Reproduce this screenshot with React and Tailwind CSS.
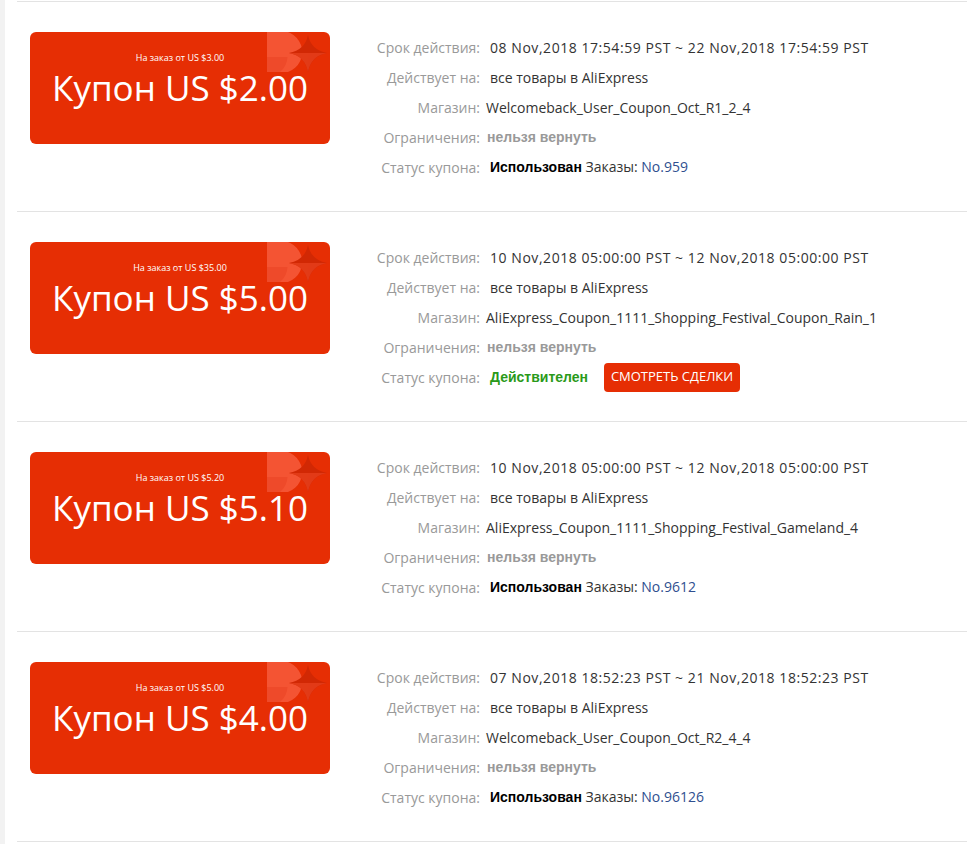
const coupons = [
  {
    min: 'На заказ от US $3.00',
    amount: 'Купон US $2.00',
    period: '08 Nov,2018 17:54:59 PST ~ 22 Nov,2018 17:54:59 PST',
    store: 'Welcomeback_User_Coupon_Oct_R1_2_4',
    used: true,
    order: 'No.959',
  },
  {
    min: 'На заказ от US $35.00',
    amount: 'Купон US $5.00',
    period: '10 Nov,2018 05:00:00 PST ~ 12 Nov,2018 05:00:00 PST',
    store: 'AliExpress_Coupon_1111_Shopping_Festival_Coupon_Rain_1',
    used: false,
  },
  {
    min: 'На заказ от US $5.20',
    amount: 'Купон US $5.10',
    period: '10 Nov,2018 05:00:00 PST ~ 12 Nov,2018 05:00:00 PST',
    store: 'AliExpress_Coupon_1111_Shopping_Festival_Gameland_4',
    used: true,
    order: 'No.9612',
  },
  {
    min: 'На заказ от US $5.00',
    amount: 'Купон US $4.00',
    period: '07 Nov,2018 18:52:23 PST ~ 21 Nov,2018 18:52:23 PST',
    store: 'Welcomeback_User_Coupon_Oct_R2_4_4',
    used: true,
    order: 'No.96126',
  },
];

function CouponCard({ min, amount }) {
  return (
    <div className="relative w-[300px] h-[112px] rounded-[6px] bg-[#e62e04] overflow-hidden flex flex-col items-center text-white">
      {/* corner decoration */}
      <svg className="absolute top-0 right-0" width="64" height="44" viewBox="0 0 64 44">
        <path d="M1 0 H8 A21 21 0 0 1 22 40 H1 Z" fill="#f65a3c" opacity="0.85" />
        <path d="M1 25 H21.5 A21 21 0 0 1 14 40 H1 Z" fill="#ee4a2a" />
        <path d="M42 3 Q45 18 61 21 Q45 24 42 40 Q39 24 23 21 Q39 18 42 3 Z" fill="#d12804" />
        <path d="M42 21 L61 21 Q45 24 42 40 Z" fill="#e23a17" />
        <path d="M42 21 L23 21 Q39 24 42 40 Z" fill="#ea4320" opacity="0.7" />
      </svg>
      <div className="relative mt-[21px] text-[9px] leading-[10px] font-['Open_Sans',sans-serif]">{min}</div>
      <div className="relative mt-[7px] text-[35px] leading-[36px] font-['Open_Sans',sans-serif]">{amount}</div>
    </div>
  );
}

function Row({ label, children }) {
  return (
    <div className="flex items-center h-[30px]">
      <div className="w-[160px] text-right text-[#999] pr-[10px]">{label}</div>
      <div className="flex items-center text-[#333]">{children}</div>
    </div>
  );
}

function CouponItem({ c }) {
  return (
    <div className="h-[210px] border-t border-[#e3e3e3] flex pl-[13px] pt-[30px]">
      <CouponCard min={c.min} amount={c.amount} />
      <div className="flex flex-col text-[14px] font-['Open_Sans',sans-serif]">
        <Row label="Срок действия:">
          <span className="tracking-[0.55px]">{c.period}</span>
        </Row>
        <Row label="Действует на:">все товары в AliExpress</Row>
        <Row label="Магазин:">
          <span className="-ml-[4px]">{c.store}</span>
        </Row>
        <Row label="Ограничения:">
          <span className="-ml-[3px] font-bold text-[#999] font-['Liberation_Sans',sans-serif]">нельзя вернуть</span>
        </Row>
        <Row label="Статус купона:">
          {c.used ? (
            <span>
              <span className="font-bold text-black font-['Liberation_Sans',sans-serif]">Использован</span>{' '}
              <span className="text-[#333]">Заказы: </span>
              <span className="text-[#2f4f8f]">{c.order}</span>
            </span>
          ) : (
            <>
              <span className="font-bold text-[#2a9a1a] font-['Liberation_Sans',sans-serif]">Действителен</span>
              <button className="ml-[16px] h-[29px] w-[136px] rounded-[4px] bg-[#e62e04] text-white text-[13px]">
                СМОТРЕТЬ СДЕЛКИ
              </button>
            </>
          )}
        </Row>
      </div>
    </div>
  );
}

export default function App() {
  return (
    <div className="flex min-h-[844px] bg-white font-['Open_Sans',sans-serif]">
      <div className="w-[5px] bg-[#f2f2f2] shrink-0" />
      <div className="flex-1 pl-[12px] pt-[1px]">
        {coupons.map((c, i) => (
          <CouponItem key={i} c={c} />
        ))}
        <div className="border-t border-[#e3e3e3]" />
      </div>
    </div>
  );
}
